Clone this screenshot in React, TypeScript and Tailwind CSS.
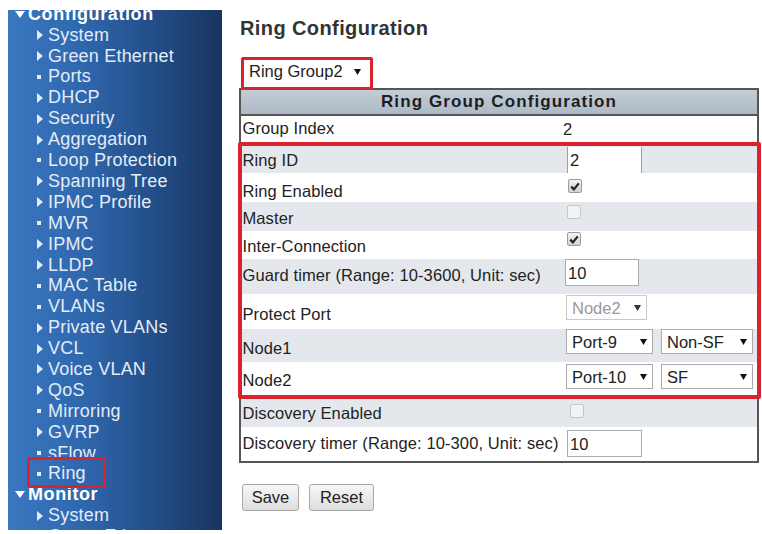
import React from "react";

type Item = { k: "h" | "a" | "b"; label: string; ring?: boolean };

const items: Item[] = [
  { k: "h", label: "Configuration" },
  { k: "a", label: "System" },
  { k: "a", label: "Green Ethernet" },
  { k: "b", label: "Ports" },
  { k: "a", label: "DHCP" },
  { k: "a", label: "Security" },
  { k: "a", label: "Aggregation" },
  { k: "b", label: "Loop Protection" },
  { k: "a", label: "Spanning Tree" },
  { k: "a", label: "IPMC Profile" },
  { k: "b", label: "MVR" },
  { k: "a", label: "IPMC" },
  { k: "a", label: "LLDP" },
  { k: "b", label: "MAC Table" },
  { k: "b", label: "VLANs" },
  { k: "a", label: "Private VLANs" },
  { k: "a", label: "VCL" },
  { k: "a", label: "Voice VLAN" },
  { k: "a", label: "QoS" },
  { k: "b", label: "Mirroring" },
  { k: "a", label: "GVRP" },
  { k: "b", label: "sFlow" },
  { k: "b", label: "Ring", ring: true },
  { k: "h", label: "Monitor" },
  { k: "a", label: "System" },
  { k: "a", label: "Green Ethernet" },
];

function Sidebar() {
  return (
    <div className="ml-[8px] mt-[10px] h-[520px] w-[214px] shrink-0 overflow-hidden bg-[linear-gradient(90deg,#3a78c0_0%,#2f67ad_35%,#24508c_65%,#183561_100%)]">
      <div className="-mt-[6.2px]">
        {items.map((it, i) =>
          it.k === "h" ? (
            <div
              key={i}
              className="flex h-[20.9px] items-center pl-[7px] text-[18px] font-bold leading-[20.9px] tracking-[0.6px] text-white"
            >
              <span className="flex w-[13px] items-center">
                <svg width="10" height="7" viewBox="0 0 10 7">
                  <path d="M0 0H10L5 7Z" fill="#ffffff" />
                </svg>
              </span>
              <span>{it.label}</span>
            </div>
          ) : (
            <div
              key={i}
              className="relative flex h-[20.9px] items-center pl-[29px] text-[18px] leading-[20.9px] tracking-[0.2px] text-[#e4ecf7]"
            >
              <span className="flex w-[11px] items-center">
                {it.k === "a" ? (
                  <svg width="6" height="10" viewBox="0 0 6 10">
                    <path d="M0 0L6 5L0 10Z" fill="#e4ecf7" />
                  </svg>
                ) : (
                  <span className="block h-[4px] w-[4px] bg-[#e4ecf7]" />
                )}
              </span>
              <span>{it.label}</span>
              {it.ring && (
                <div className="absolute left-[19px] top-[-6.6px] h-[31px] w-[79px] rounded-[3px] border-[3px] border-[#d9232e]" />
              )}
            </div>
          )
        )}
      </div>
    </div>
  );
}

function Arrow({ color = "#111111" }: { color?: string }) {
  return (
    <svg width="7" height="6" viewBox="0 0 7 6">
      <path d="M0 0H7L3.5 6Z" fill={color} />
    </svg>
  );
}

function Checked() {
  return (
    <div className="flex h-[14px] w-[14px] items-center justify-center rounded-[2px] border border-[#9c9c9c] bg-[linear-gradient(#f4f4f4,#d2d2d2)]">
      <svg width="10" height="9" viewBox="0 0 10 9">
        <path d="M1.2 4.6L3.9 7.3L8.8 1.4" stroke="#262626" strokeWidth="2.2" fill="none" />
      </svg>
    </div>
  );
}

function Unchecked() {
  return <div className="h-[14px] w-[14px] rounded-[2px] border border-[#c6c6c6] bg-[#f3f3f3]" />;
}

function Row({
  bg,
  h,
  label,
  lpt,
  vpt,
  children,
}: {
  bg: string;
  h: string;
  label: string;
  lpt: string;
  vpt: string;
  children?: React.ReactNode;
}) {
  return (
    <div className={`flex ${h} ${bg}`}>
      <div className={`w-[322px] shrink-0 pl-[1.5px] text-[16.5px] leading-[20px] tracking-[0.1px] text-[#222] ${lpt}`}>
        {label}
      </div>
      <div className={`flex flex-1 items-start gap-[8px] ${vpt}`}>{children}</div>
    </div>
  );
}

function Select({
  w,
  text,
  disabled,
}: {
  w: string;
  text: string;
  disabled?: boolean;
}) {
  return (
    <div
      className={`flex h-[25px] ${w} items-center justify-between border bg-white pl-[5px] pr-[5px] text-[16.5px] leading-[20px] ${
        disabled ? "border-[#c9c9c9] text-[#9a9a9a]" : "border-[#ababab] text-[#222]"
      }`}
    >
      <span>{text}</span>
      <Arrow color={disabled ? "#333333" : "#111111"} />
    </div>
  );
}

function Input({ w, h, text, cls }: { w: string; h: string; text: string; cls: string }) {
  return (
    <div className={`flex ${w} ${h} items-center bg-white pl-[2px] text-[16.5px] leading-[20px] text-[#222] ${cls}`}>
      {text}
    </div>
  );
}

function Main() {
  const grey = "bg-[#e4e8ed]";
  const white = "bg-white";
  return (
    <div className="ml-[17px] w-[520px] shrink-0">
      <h1 className="ml-[1px] mt-[16px] text-[20px] font-bold leading-[24px] tracking-[0.4px] text-[#333]">
        Ring Configuration
      </h1>
      <div className="relative z-10 ml-[2px] mt-[17px] flex h-[33px] w-[132px] items-start rounded-[2px] border-[3px] border-[#d9232e] bg-white pl-[5px] pt-[1px] text-[16.5px] leading-[20px] text-[#222]">
        <span>Ring Group2</span>
        <span className="ml-[11px] mt-[8px] flex">
          <Arrow />
        </span>
      </div>
      <div className="-mt-[2px] w-[520px] border-2 border-[#555]">
        <div className="flex h-[26px] items-center justify-center border-b-2 border-[#555] bg-[linear-gradient(#c3cdd7,#adb9c6)] text-[17px] font-bold tracking-[1.1px] text-[#1e1e1e]">
          Ring Group Configuration
        </div>
        <Row bg={white} h="h-[29px]" label="Group Index" lpt="pt-[2px]" vpt="pt-[3px]">
          <span className="text-[16.5px] leading-[20px] text-[#222]">2</span>
        </Row>
        <div className="relative">
          <Row bg={grey} h="h-[28px]" label="Ring ID" lpt="pt-[4.7px]" vpt="pt-[2px]">
            <Input
              w="w-[75px]"
              h="h-[26px]"
              text="2"
              cls="ml-[4px] border-x border-[#9f9f9f]"
            />
          </Row>
          <Row bg={white} h="h-[29px]" label="Ring Enabled" lpt="pt-[8.2px]" vpt="pt-[6px] pl-[5px]">
            <Checked />
          </Row>
          <Row bg={grey} h="h-[29px]" label="Master" lpt="pt-[5.7px]" vpt="pt-[3px] pl-[4px]">
            <Unchecked />
          </Row>
          <Row bg={white} h="h-[28px]" label="Inter-Connection" lpt="pt-[5.2px]" vpt="pt-[1px] pl-[4px]">
            <Checked />
          </Row>
          <Row
            bg={grey}
            h="h-[35px]"
            label="Guard timer (Range: 10-3600, Unit: sec)"
            lpt="pt-[5.7px]"
            vpt="pt-0"
          >
            <Input w="w-[74px]" h="h-[27px]" text="10" cls="ml-[2px] border border-[#ababab]" />
          </Row>
          <Row bg={white} h="h-[35px]" label="Protect Port" lpt="pt-[10.2px]" vpt="pt-[1px] pl-[3px]">
            <Select w="w-[81px]" text="Node2" disabled />
          </Row>
          <Row bg={grey} h="h-[33px]" label="Node1" lpt="pt-[9.2px]" vpt="pt-0 pl-[3px]">
            <Select w="w-[87px]" text="Port-9" />
            <Select w="w-[92px]" text="Non-SF" />
          </Row>
          <Row bg={white} h="h-[35px]" label="Node2" lpt="pt-[8.2px]" vpt="pt-[2px] pl-[3px]">
            <Select w="w-[87px]" text="Port-10" />
            <Select w="w-[92px]" text="SF" />
          </Row>
          <div className="absolute -bottom-[2px] -left-[3px] -right-[4px] -top-[3px] rounded-[2px] border-[4px] border-[#d9232e]" />
        </div>
        <Row bg={grey} h="h-[30px]" label="Discovery Enabled" lpt="pt-[5.7px]" vpt="pt-[7px] pl-[7px]">
          <Unchecked />
        </Row>
        <Row
          bg={white}
          h="h-[34px]"
          label="Discovery timer (Range: 10-300, Unit: sec)"
          lpt="pt-[6.2px]"
          vpt="pt-[3px]"
        >
          <Input w="w-[75px]" h="h-[27px]" text="10" cls="ml-[4px] border border-[#ababab]" />
        </Row>
      </div>
      <div className="ml-[3px] mt-[21px] flex gap-[10px]">
        <button className="flex h-[27px] w-[57px] items-center justify-center rounded-[3px] border border-[#a8a8a8] bg-[linear-gradient(#f7f7f7,#dddddd)] text-[16.5px] text-[#222]">
          Save
        </button>
        <button className="flex h-[27px] w-[65px] items-center justify-center rounded-[3px] border border-[#a8a8a8] bg-[linear-gradient(#f7f7f7,#dddddd)] text-[16.5px] text-[#222]">
          Reset
        </button>
      </div>
    </div>
  );
}

export default function App() {
  return (
    <div className="flex h-[534px] w-[762px] overflow-hidden bg-white font-['Liberation_Sans',Arial,sans-serif]">
      <Sidebar />
      <Main />
    </div>
  );
}
